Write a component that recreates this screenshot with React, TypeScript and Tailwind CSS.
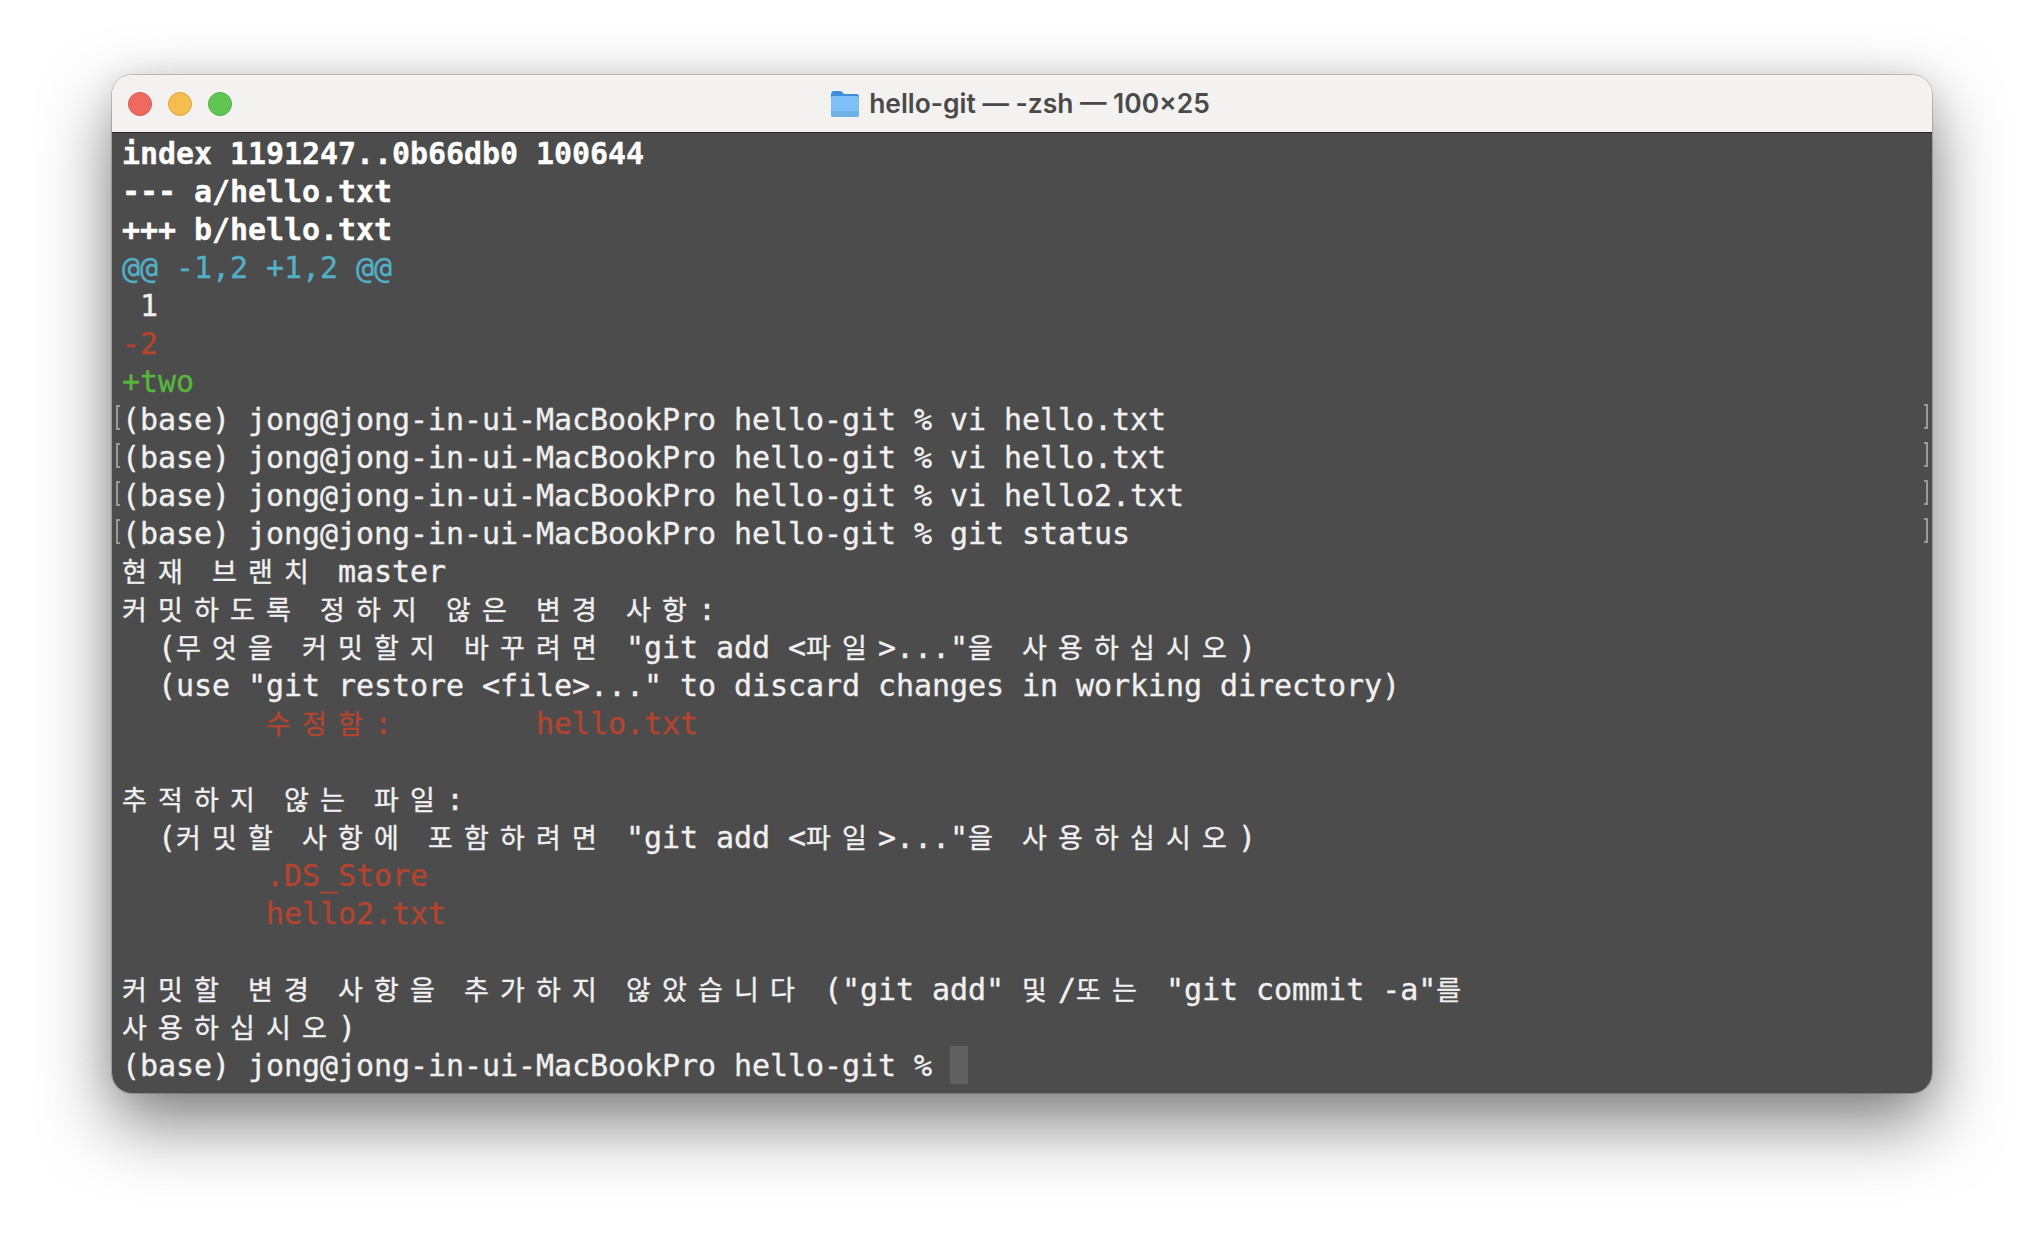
const PROMPT = "(base) jong@jong-in-ui-MacBookPro hello-git % ";

type Line = { text: string; color?: string; marks?: boolean; cursor?: boolean };

const LINES: Line[] = [
  { text: "index 1191247..0b66db0 100644", color: "font-bold text-white" },
  { text: "--- a/hello.txt", color: "font-bold text-white" },
  { text: "+++ b/hello.txt", color: "font-bold text-white" },
  { text: "@@ -1,2 +1,2 @@", color: "text-[#52b1c6]" },
  { text: " 1" },
  { text: "-2", color: "text-[#b5442e]" },
  { text: "+two", color: "text-[#57b53d]" },
  { text: PROMPT + "vi hello.txt", marks: true },
  { text: PROMPT + "vi hello.txt", marks: true },
  { text: PROMPT + "vi hello2.txt", marks: true },
  { text: PROMPT + "git status", marks: true },
  { text: "현재 브랜치 master" },
  { text: "커밋하도록 정하지 않은 변경 사항:" },
  { text: '  (무엇을 커밋할지 바꾸려면 "git add <파일>..."을 사용하십시오)' },
  { text: '  (use "git restore <file>..." to discard changes in working directory)' },
  { text: "        수정함:        hello.txt", color: "text-[#b5442e]" },
  { text: "" },
  { text: "추적하지 않는 파일:" },
  { text: '  (커밋할 사항에 포함하려면 "git add <파일>..."을 사용하십시오)' },
  { text: "        .DS_Store", color: "text-[#b5442e]" },
  { text: "        hello2.txt", color: "text-[#b5442e]" },
  { text: "" },
  { text: '커밋할 변경 사항을 추가하지 않았습니다 ("git add" 및/또는 "git commit -a"를' },
  { text: "사용하십시오)" },
  { text: PROMPT, cursor: true },
];

const HANGUL = /[\uac00-\ud7a3]/;

// hangul takes two terminal cells, so every syllable gets its own box
function Cells({ text }: { text: string }) {
  const parts = text.split(/([\uac00-\ud7a3])/);
  return (
    <>
      {parts.map((part, i) =>
        HANGUL.test(part) ? (
          <span key={i} className="inline-block w-[36px] text-[27px] tracking-normal font-['Noto_Sans_CJK_KR',sans-serif]">
            {part}
          </span>
        ) : (
          <span key={i}>{part}</span>
        )
      )}
    </>
  );
}

function FolderIcon() {
  return (
    <svg width="30" height="28" viewBox="0 0 30 28" className="mr-[9px]">
      <path d="M1 5 Q1 1 4 1 H10 Q12 1 13 3 L14 4 H27 Q29 4 29 7 V12 H1 Z" fill="#3f8fd8" />
      <path d="M1 8 Q1 6 3 6 H27 Q29 6 29 8 V25 Q29 27 27 27 H3 Q1 27 1 25 Z" fill="#7cc0f5" />
      <path d="M1 21 H29 V25 Q29 27 27 27 H3 Q1 27 1 25 Z" fill="#6fb2e8" />
    </svg>
  );
}

export default function App() {
  return (
    <div className="h-screen bg-white overflow-hidden pt-[75px] pl-[112px]">
      <div className="w-[1820px] h-[1018px] rounded-[20px] overflow-hidden flex flex-col shadow-[0_0_0_1px_rgba(0,0,0,0.18),0_30px_70px_rgba(0,0,0,0.5),0_0_30px_rgba(0,0,0,0.08)]">
        {/* Title bar */}
        <div className="relative h-[58px] shrink-0 bg-[#f3f2f0] border-b border-[#222222] flex items-center justify-center pr-[4px]">
          <div className="absolute left-[16px] top-[17px] flex gap-[16px]">
            <div className="w-[24px] h-[24px] rounded-full bg-[#ee6a5f] border border-[#d9574d]"></div>
            <div className="w-[24px] h-[24px] rounded-full bg-[#f5bd4f] border border-[#dfa53a]"></div>
            <div className="w-[24px] h-[24px] rounded-full bg-[#61c554] border border-[#4fae43]"></div>
          </div>
          <FolderIcon />
          <span className="text-[26.4px] font-semibold text-[#4a4a4a] font-['Inter',sans-serif]">
            hello-git — -zsh — 100×25
          </span>
        </div>

        {/* Terminal */}
        <div className="flex-1 bg-[#4c4c4c] px-[10px] pt-[1px] text-[30px] tracking-[-0.06px] text-[#f0f0f0] [-webkit-text-stroke:0.35px_currentColor] font-['DejaVu_Sans_Mono',monospace]">
          {LINES.map((line, i) => (
            <div
              key={i}
              className={`relative h-[38px] leading-[38px] whitespace-pre ${HANGUL.test(line.text) ? "" : "pt-[1px]"} ${line.color ?? ""}`}
            >
              <Cells text={line.text} />
              {line.cursor && <span className="inline-block align-top -mt-[1px] w-[18px] h-[38px] bg-[#606060]"></span>}
              {line.marks && (
                <>
                  <span className="absolute left-[-6px] top-[5px] w-[4px] h-[25px] border-l-2 border-y-2 border-[#9a9a9a]"></span>
                  <span className="absolute right-[-6px] top-[4px] w-[4px] h-[25px] border-r-2 border-y-2 border-[#9a9a9a]"></span>
                </>
              )}
            </div>
          ))}
        </div>
      </div>
    </div>
  );
}
